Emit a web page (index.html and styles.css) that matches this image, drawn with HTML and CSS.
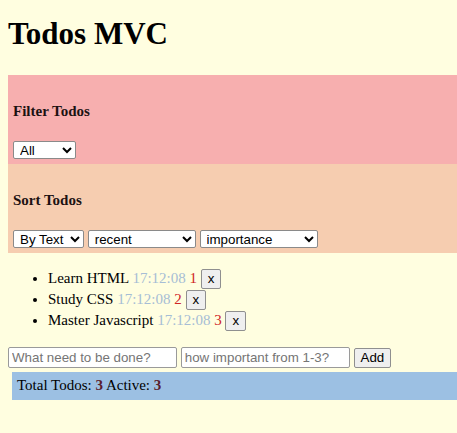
FILE: index.html
```html
<!DOCTYPE html>
<html lang="en">
<head>
<meta charset="utf-8">
<title>Todos MVC</title>
<link rel="stylesheet" href="styles.css">
</head>
<body>
<h1 class="title">Todos MVC</h1>
<section class="panel panel-filter">
  <h4 class="panel-title">Filter Todos</h4>
  <select class="sel sel-filter">
    <option>All</option>
    <option>Active</option>
    <option>Done</option>
  </select>
</section>
<section class="panel panel-sort">
  <h4 class="panel-title">Sort Todos</h4>
  <select class="sel sel-text">
    <option>By Text</option>
  </select>
  <select class="sel sel-recent">
    <option>recent</option>
  </select>
  <select class="sel sel-imp">
    <option>importance</option>
  </select>
</section>
<ul class="todos">
  <li class="todo">Learn HTML <span class="time">17:12:08</span> <span class="imp">1</span> <button class="btn btn-x">x</button></li>
  <li class="todo">Study CSS <span class="time">17:12:08</span> <span class="imp">2</span> <button class="btn btn-x">x</button></li>
  <li class="todo">Master Javascript <span class="time">17:12:08</span> <span class="imp">3</span> <button class="btn btn-x">x</button></li>
</ul>
<form class="add-form">
  <input class="field" type="text" placeholder="What need to be done?">
  <input class="field" type="text" placeholder="how important from 1-3?">
  <button class="btn btn-add" type="button">Add</button>
</form>
<div class="total">Total Todos: <b class="count">3</b> Active: <b class="count">3</b></div>
</body>
</html>
```
FILE: styles.css
```css
body {
  margin: 0;
  padding: 8px;
  background: #fffee0;
  font-family: "Liberation Serif", "Times New Roman", serif;
  font-size: 15px;
  color: #000;
}
.title {
  font-size: 31px;
  margin: 8px 0 23px;
}
.panel {
  margin-right: -8px;
  padding: 5px;
}
.panel-filter {
  background: #f7afaf;
}
.panel-sort {
  background: #f6cdb0;
}
.panel-title {
  font-size: 15px;
  margin: 23px 0 21px;
  color: #1c1212;
}
.sel {
  box-sizing: border-box;
  height: 18px;
  padding: 0 2px;
  font-family: "Liberation Sans", Arial, sans-serif;
  font-size: 13.333px;
  background: #fff;
  color: #000;
  border: 1px solid #8a8a8a;
  border-radius: 2px;
  vertical-align: baseline;
}
.sel-filter { width: 63px; }
.sel-text { width: 71px; }
.sel-recent { width: 108px; }
.sel-imp { width: 118px; }
.todos {
  margin: 15px 0;
  padding-left: 40px;
}
.todo {
  line-height: 21px;
}
.time {
  color: #a6bdd5;
}
.imp {
  color: #cf2525;
}
.btn {
  box-sizing: border-box;
  height: 20px;
  padding: 1px 6px;
  line-height: 16px;
  font-family: "Liberation Sans", Arial, sans-serif;
  font-size: 13.333px;
  background: #efefef;
  border: 1px solid #8f8f8f;
  border-radius: 2px;
  color: #000;
}
.field {
  box-sizing: border-box;
  width: 169px;
  height: 21px;
  padding: 1px 3px;
  font-family: "Liberation Sans", Arial, sans-serif;
  font-size: 13.333px;
  border: 1px solid #9a9a9a;
  border-radius: 2px;
  background: #fff;
}
.field::placeholder {
  color: #757575;
}
.add-form {
  margin: 0;
  line-height: 22px;
}
.total {
  margin: 4px -8px 0 4px;
  padding: 5px 5px 6px;
  background: #9cc0e3;
}
.count {
  color: #5a1d2e;
}
```
